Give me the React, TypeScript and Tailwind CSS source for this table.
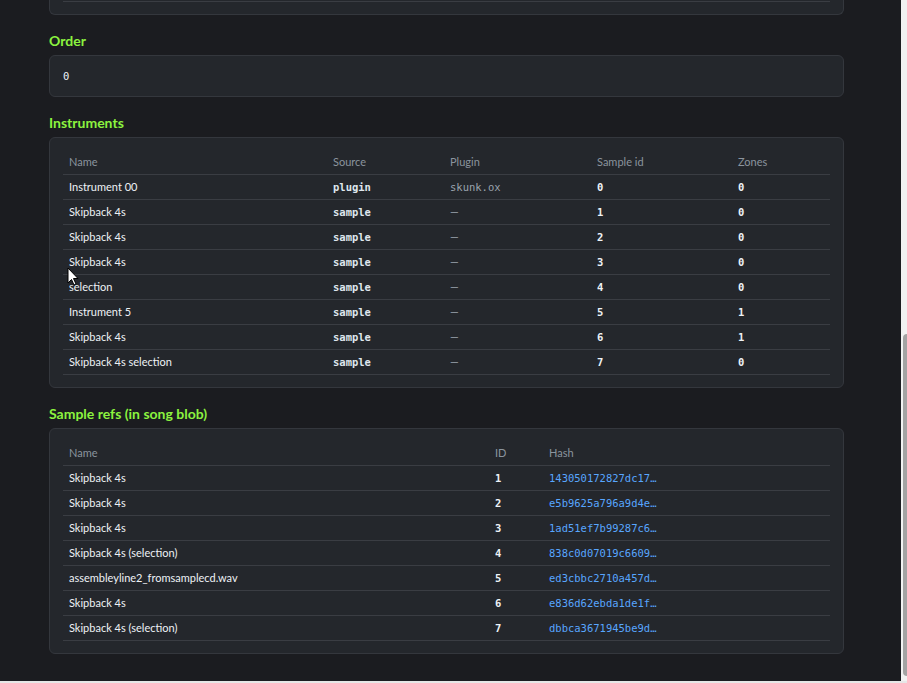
const instruments = [
  { name: 'Instrument 00', source: 'plugin', plugin: 'skunk.ox', sample: '0', zones: '0' },
  { name: 'Skipback 4s', source: 'sample', plugin: '', sample: '1', zones: '0' },
  { name: 'Skipback 4s', source: 'sample', plugin: '', sample: '2', zones: '0' },
  { name: 'Skipback 4s', source: 'sample', plugin: '', sample: '3', zones: '0' },
  { name: 'selection', source: 'sample', plugin: '', sample: '4', zones: '0' },
  { name: 'Instrument 5', source: 'sample', plugin: '', sample: '5', zones: '1' },
  { name: 'Skipback 4s', source: 'sample', plugin: '', sample: '6', zones: '1' },
  { name: 'Skipback 4s selection', source: 'sample', plugin: '', sample: '7', zones: '0' },
];

const refs = [
  { name: 'Skipback 4s', id: '1', hash: '143050172827dc17…' },
  { name: 'Skipback 4s', id: '2', hash: 'e5b9625a796a9d4e…' },
  { name: 'Skipback 4s', id: '3', hash: '1ad51ef7b99287c6…' },
  { name: 'Skipback 4s (selection)', id: '4', hash: '838c0d07019c6609…' },
  { name: 'assembleyline2_fromsamplecd.wav', id: '5', hash: 'ed3cbbc2710a457d…' },
  { name: 'Skipback 4s', id: '6', hash: 'e836d62ebda1de1f…' },
  { name: 'Skipback 4s (selection)', id: '7', hash: 'dbbca3671945be9d…' },
];

const mono = "font-['DejaVu_Sans_Mono','Liberation_Mono',monospace] text-[10.5px]";
const th = 'text-left font-normal text-[#8b949e] pl-[6px] pt-[2px] pb-[4px] leading-4';
const td = 'pl-[6px] py-[4px] leading-4';

function Heading({ children }: { children: React.ReactNode }) {
  return <h2 className="mt-4 mb-1 text-[14px] leading-5 font-bold text-[#8cf33f]">{children}</h2>;
}

function Card({ children }: { children: React.ReactNode }) {
  return (
    <div className="rounded-md border border-[#34373d] bg-[#24272c] px-[13px] pt-[14px] pb-[12px]">
      {children}
    </div>
  );
}

export default function App() {
  return (
    <div className="relative w-[907px] h-[683px] overflow-hidden bg-[#e6e6e6] font-['Lato','Noto_Sans',sans-serif] text-[11px] text-[#eef2f6]">
      <div className="flex h-[681px]">
        <div className="w-[901px] h-full bg-[#1b1c20]">
          <div className="ml-[49px] w-[795px]">
            <div className="rounded-b-md border-x border-b border-[#34373d] bg-[#24272c] px-[13px] pt-px pb-[12px]">
              <div className="h-px bg-[#3a3d43]" />
            </div>

            <Heading>Order</Heading>
            <div className="h-[42px] rounded-md border border-[#34373d] bg-[#24272c] px-[13px] py-3 leading-4">
              <span className={`${mono} leading-4`}>0</span>
            </div>

            <Heading>Instruments</Heading>
            <Card>
              <table className="w-full table-fixed border-collapse">
                <thead>
                  <tr className="border-b border-[#3a3d43]">
                    <th className={`${th} w-[264px]`}>Name</th>
                    <th className={`${th} w-[117px]`}>Source</th>
                    <th className={`${th} w-[147px]`}>Plugin</th>
                    <th className={`${th} w-[141px]`}>Sample id</th>
                    <th className={th}>Zones</th>
                  </tr>
                </thead>
                <tbody>
                  {instruments.map((r, i) => (
                    <tr key={i} className="border-b border-[#3a3d43]">
                      <td className={td}>{r.name}</td>
                      <td className={`${td} ${mono} font-bold text-[#dfe6ee]`}>{r.source}</td>
                      <td className={`${td} text-[#9aa3ad] ${r.plugin ? mono : ''}`}>{r.plugin || '—'}</td>
                      <td className={`${td} ${mono} font-bold`}>{r.sample}</td>
                      <td className={`${td} ${mono} font-bold`}>{r.zones}</td>
                    </tr>
                  ))}
                </tbody>
              </table>
            </Card>

            <Heading>Sample refs (in song blob)</Heading>
            <Card>
              <table className="w-full table-fixed border-collapse">
                <thead>
                  <tr className="border-b border-[#3a3d43]">
                    <th className={`${th} w-[426px]`}>Name</th>
                    <th className={`${th} w-[54px]`}>ID</th>
                    <th className={th}>Hash</th>
                  </tr>
                </thead>
                <tbody>
                  {refs.map((r) => (
                    <tr key={r.id} className="border-b border-[#3a3d43]">
                      <td className={td}>{r.name}</td>
                      <td className={`${td} ${mono} font-bold`}>{r.id}</td>
                      <td className={`${td} ${mono} text-[#58a6ff]`}>{r.hash}</td>
                    </tr>
                  ))}
                </tbody>
              </table>
            </Card>
          </div>
        </div>
        <div className="w-[6px] h-full bg-[#f1f1f1] pt-[334px] pb-[5px] pl-[2px]">
          <div className="h-full rounded-l-sm bg-[#a3a3a3]" />
        </div>
      </div>

      <svg className="absolute left-[67px] top-[267px]" width="12" height="19" viewBox="0 0 12 19">
        <path d="M1 1 L1 16 L4.5 12.5 L7 18 L9 17 L6.5 11.5 L11 11.5 Z" fill="#fff" stroke="#000" strokeWidth="1" />
      </svg>
    </div>
  );
}
